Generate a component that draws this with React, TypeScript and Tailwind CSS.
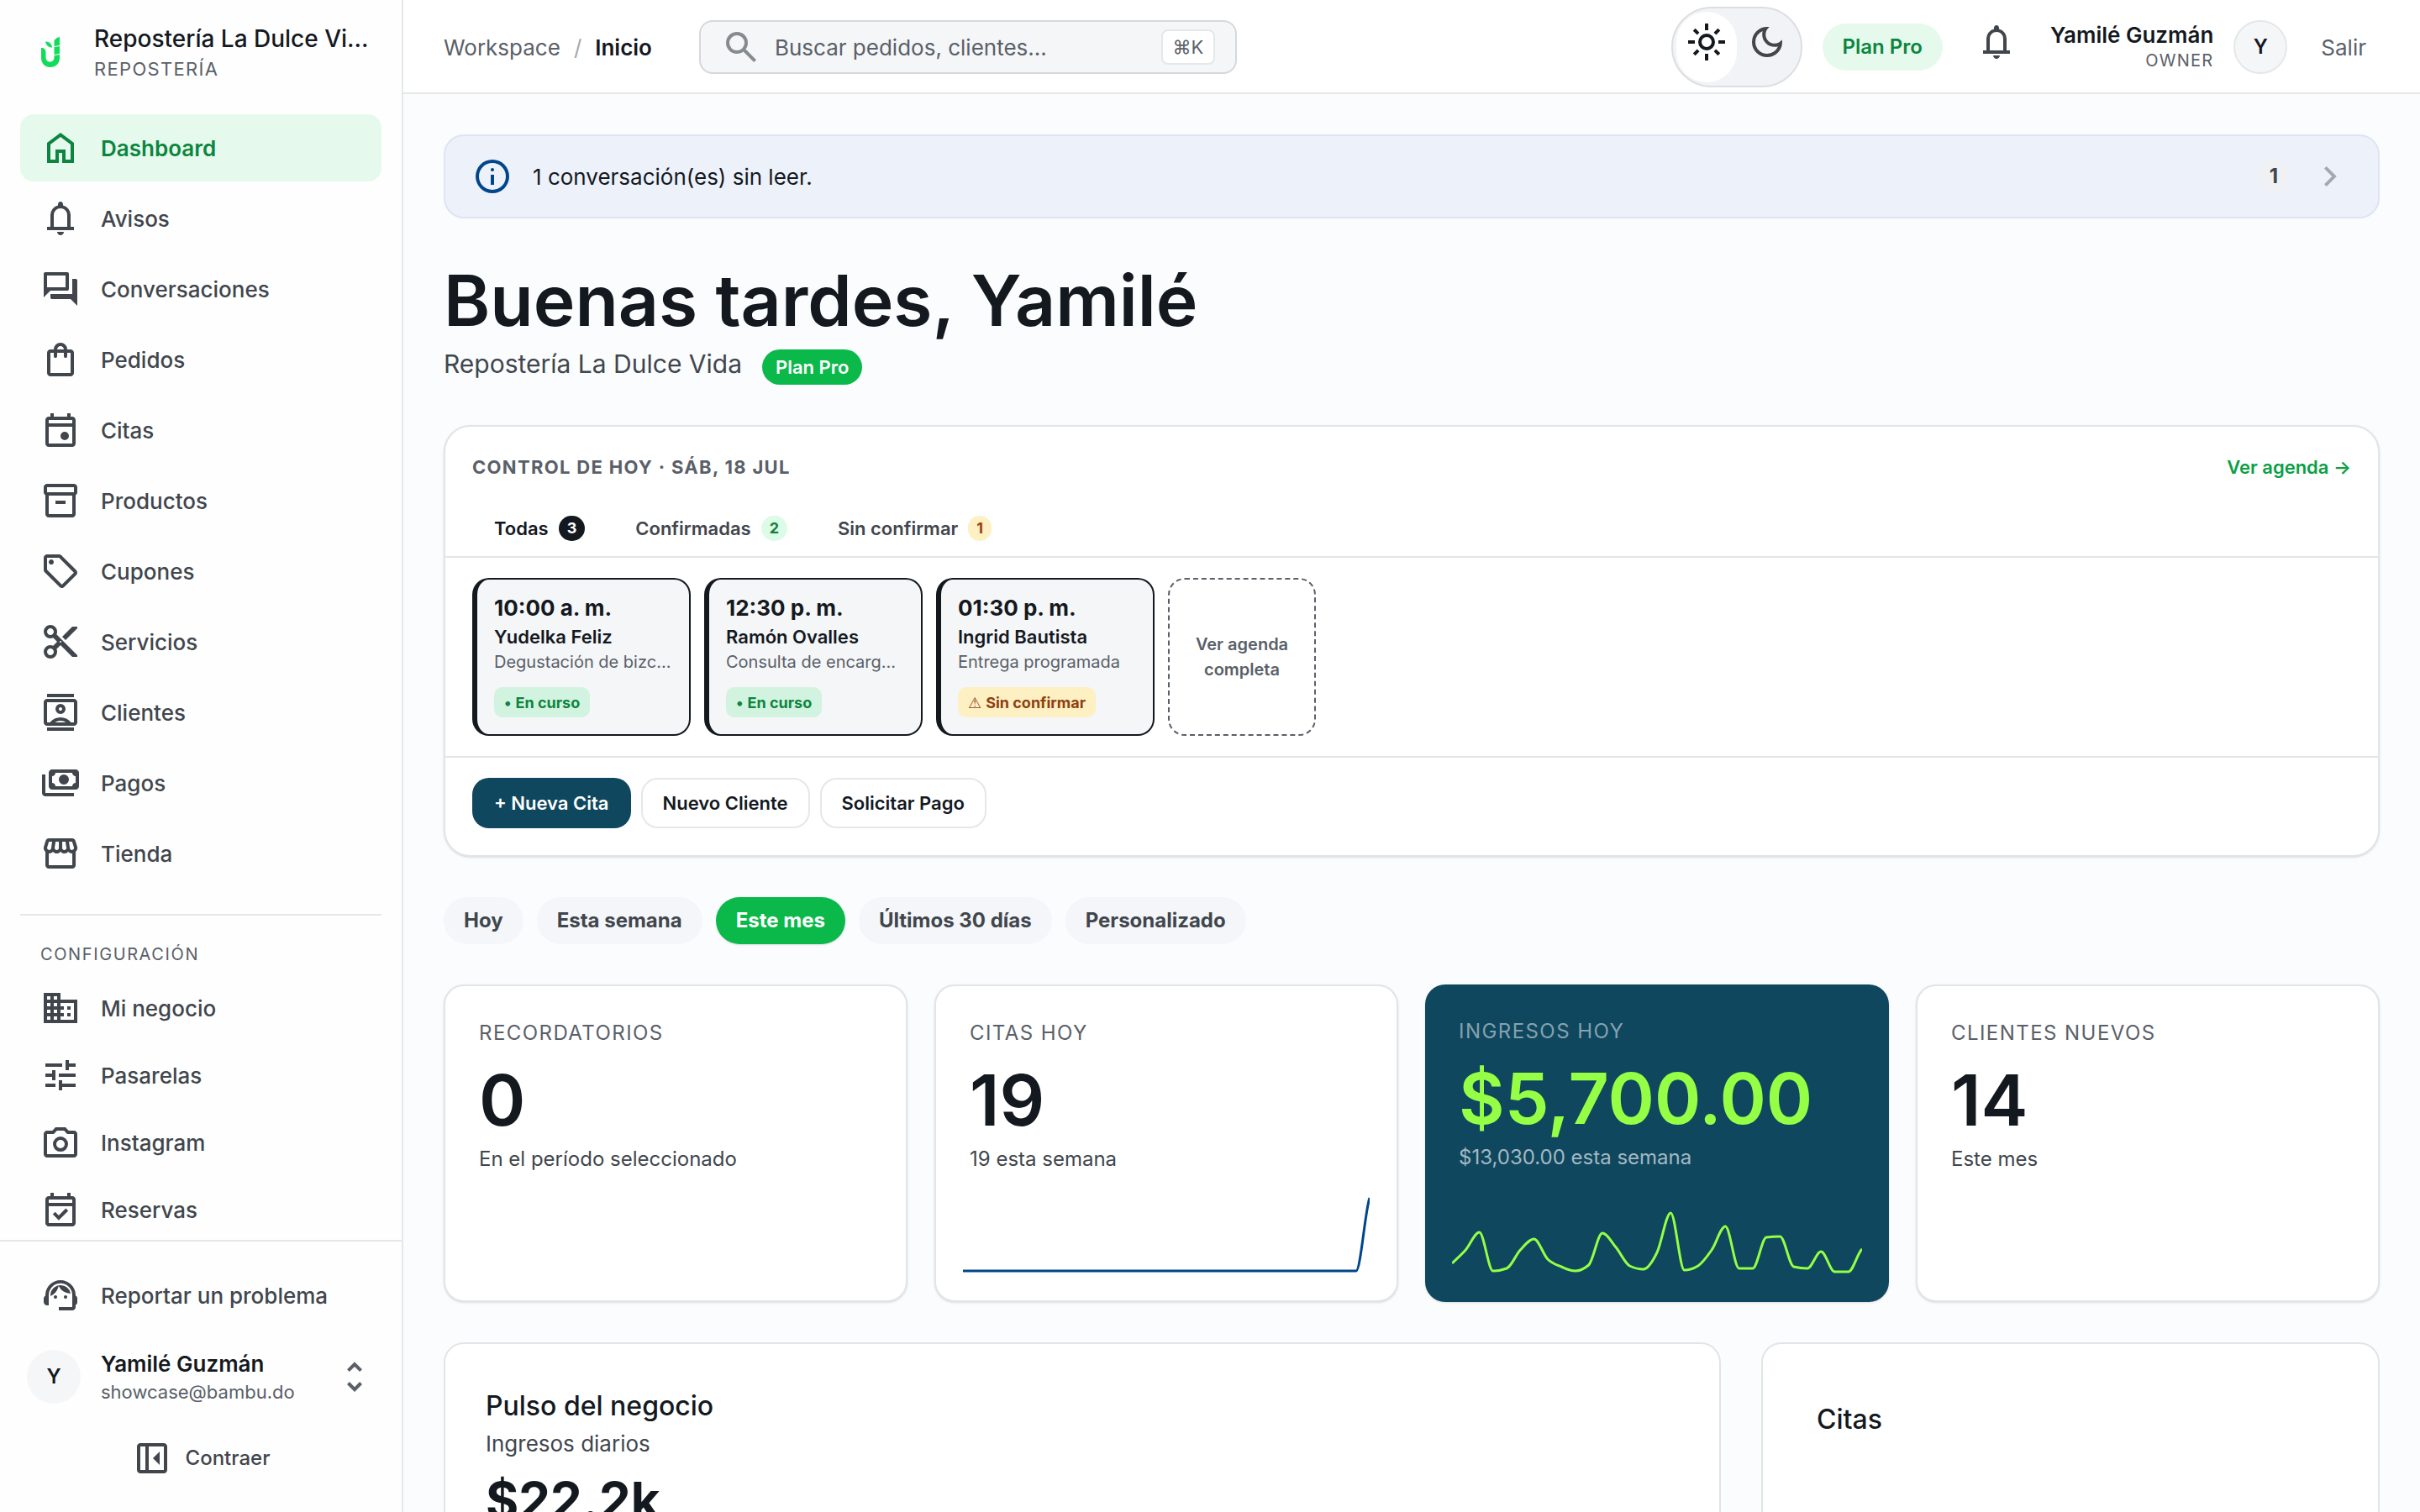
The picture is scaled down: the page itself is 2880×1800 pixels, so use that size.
import React from 'react';
import clsx from 'clsx';

// Icon outlines, drawn on the 960 unit grid.
const icons = {
  home: 'M240-200h120v-240h240v240h120v-360L480-740 240-560v360Zm-80 80v-480l320-240 320 240v480H520v-240h-80v240H160Z',
  bell: 'M160-200v-80h80v-280q0-83 50-147.5T420-792v-28q0-25 17.5-42.5T480-880q25 0 42.5 17.5T540-820v28q80 20 130 84.5T720-560v280h80v80H160Zm320 120q-33 0-56.5-23.5T400-160h160q0 33-23.5 56.5T480-80ZM320-280h320v-280q0-66-47-113t-113-47q-66 0-113 47t-47 113v280Z',
  forum: 'M280-240q-17 0-28.5-11.5T240-280v-80h520v-360h80q17 0 28.5 11.5T880-680v600L720-240H280ZM80-280v-560q0-17 11.5-28.5T120-880h520q17 0 28.5 11.5T680-840v360q0 17-11.5 28.5T640-440H240L80-280Zm520-240v-280H160v280h440Z',
  bag: 'M240-80q-33 0-56.5-23.5T160-160v-480q0-33 23.5-56.5T240-720h80q0-66 47-113t113-47q66 0 113 47t47 113h80q33 0 56.5 23.5T800-640v480q0 33-23.5 56.5T720-80H240Zm0-80h480v-480h-80v80q0 17-11.5 28.5T600-520q-17 0-28.5-11.5T560-560v-80H400v80q0 17-11.5 28.5T360-520q-17 0-28.5-11.5T320-560v-80h-80v480Zm160-560h160q0-33-23.5-56.5T480-800q-33 0-56.5 23.5T400-720Z',
  event: 'M580-240q-42 0-71-29t-29-71q0-42 29-71t71-29q42 0 71 29t29 71q0 42-29 71t-71 29ZM200-80q-33 0-56.5-23.5T120-160v-560q0-33 23.5-56.5T200-800h40v-80h80v80h320v-80h80v80h40q33 0 56.5 23.5T840-720v560q0 33-23.5 56.5T760-80H200Zm0-80h560v-400H200v400Zm0-480h560v-80H200v80Z',
  box: 'M200-80q-33 0-56.5-23.5T120-160v-451q-18-11-29-28.5T80-680v-120q0-33 23.5-56.5T160-880h640q33 0 56.5 23.5T880-800v120q0 23-11 40.5T840-611v451q0 33-23.5 56.5T760-80H200Zm0-520v440h560v-440H200Zm-40-80h640v-120H160v120Zm200 280h240v-80H360v80Z',
  tag: 'M856-390 570-104q-12 12-27 18t-30 6q-15 0-30-6t-27-18L103-457q-11-11-17-25.5T80-513v-287q0-33 23.5-56.5T160-880h287q16 0 31 6.5t26 17.5l352 353q12 12 17.5 27t5.5 30q0 15-5.5 29.5T856-390ZM513-160l286-286-353-354H160v286l353 354ZM260-640q25 0 42.5-17.5T320-700q0-25-17.5-42.5T260-760q-25 0-42.5 17.5T200-700q0 25 17.5 42.5T260-640Z',
  scissors: 'M760-120 480-400l-94 94q8 15 11 32t3 34q0 66-47 113T240-80q-66 0-113-47T80-240q0-66 47-113t113-47q17 0 34 3t32 11l94-94-94-94q-15 8-32 11t-34 3q-66 0-113-47T80-720q0-66 47-113t113-47q66 0 113 47t47 113q0 17-3 34t-11 32l494 494v40H760ZM600-520l-80-80 240-240h120v40L600-520ZM240-640q33 0 56.5-23.5T320-720q0-33-23.5-56.5T240-800q-33 0-56.5 23.5T160-720q0 33 23.5 56.5T240-640Zm240 180q8 0 14-6t6-14q0-8-6-14t-14-6q-8 0-14 6t-6 14q0 8 6 14t14 6ZM240-160q33 0 56.5-23.5T320-240q0-33-23.5-56.5T240-320q-33 0-56.5 23.5T160-240q0 33 23.5 56.5T240-160Z',
  contacts: 'M160-40v-80h640v80H160Zm0-800v-80h640v80H160Zm320 400q-50 0-85-35t-35-85q0-50 35-85t85-35q50 0 85 35t35 85q0 50-35 85t-85 35Zm0-80q17 0 28.5-11.5T520-560q0-17-11.5-28.5T480-600q-17 0-28.5 11.5T440-560q0 17 11.5 28.5T480-520ZM160-160q-33 0-56.5-23.5T80-240v-480q0-33 23.5-56.5T160-800h640q33 0 56.5 23.5T880-720v480q0 33-23.5 56.5T800-160H160Zm70-80q45-56 109-88t141-32q77 0 141 32t109 88h70v-480H160v480h70Zm118 0h264q-29-20-62.5-30T480-280q-36 0-69.5 10T348-240Z',
  payments: 'M560-440q-50 0-85-35t-35-85q0-50 35-85t85-35q50 0 85 35t35 85q0 50-35 85t-85 35ZM280-320q-33 0-56.5-23.5T200-400v-320q0-33 23.5-56.5T280-800h560q33 0 56.5 23.5T920-720v320q0 33-23.5 56.5T840-320H280Zm80-80h400q0-33 23.5-56.5T840-480v-160q-33 0-56.5-23.5T760-720H360q0 33-23.5 56.5T280-640v160q33 0 56.5 23.5T360-400Zm440 240H120q-33 0-56.5-23.5T40-240v-440h80v440h680v80Z',
  store: 'M841-518v318q0 33-23.5 56.5T761-120H201q-33 0-56.5-23.5T121-200v-318q-23-21-35.5-54t-.5-72l42-136q8-26 28.5-43t47.5-17h556q27 0 47 16.5t29 43.5l42 136q12 39-.5 71T841-518Zm-272-42q27 0 41-18.5t11-41.5l-22-140h-78v148q0 21 14 36.5t34 15.5Zm-180 0q23 0 37.5-15.5T441-612v-148h-78l-22 140q-4 24 10.5 42t37.5 18Zm-178 0q18 0 31.5-13t16.5-33l22-154h-78l-40 134q-6 20 6.5 43t41.5 23Zm540 0q29 0 42-23t6-43l-42-134h-76l22 154q3 20 16.5 33t31.5 13ZM201-200h560v-282q-5 2-6.5 2H751q-27 0-47.5-9T663-518q-18 18-41 28t-49 10q-27 0-50.5-10T481-518q-17 18-39.5 28T393-480q-29 0-52.5-10T299-518q-21 21-41.5 29.5T211-480h-4.5q-2.5 0-5.5-2v282Z',
  domain: 'M80-120v-720h400v160h400v560H80Zm80-80h80v-80h-80v80Zm0-160h80v-80h-80v80Zm0-160h80v-80h-80v80Zm0-160h80v-80h-80v80Zm160 480h80v-80h-80v80Zm0-160h80v-80h-80v80Zm0-160h80v-80h-80v80Zm0-160h80v-80h-80v80Zm160 480h320v-400H480v80h80v80h-80v80h80v80h-80v80Zm160-240v-80h80v80h-80Zm0 160v-80h80v80h-80Z',
  tune: 'M440-120v-240h80v80h320v80H520v80h-80Zm-320-80v-80h240v80H120Zm160-160v-80H120v-80h160v-80h80v240h-80Zm160-80v-80h400v80H440Zm160-160v-240h80v80h160v80H680v80h-80Zm-480-80v-80h400v80H120Z',
  camera: 'M480-260q-75 0-127.5-52.5T300-440q0-75 52.5-127.5T480-620q75 0 127.5 52.5T660-440q0 75-52.5 127.5T480-260Zm0-80q42 0 71-29t29-71q0-42-29-71t-71-29q-42 0-71 29t-29 71q0 42 29 71t71 29ZM160-120q-33 0-56.5-23.5T80-200v-480q0-33 23.5-56.5T160-760h126l74-80h240l74 80h126q33 0 56.5 23.5T880-680v480q0 33-23.5 56.5T800-120H160Zm0-80h640v-480H638l-73-80H395l-73 80H160v480Z',
  eventCheck: 'M438-226 296-368l58-58 84 84 168-168 58 58-226 226ZM200-80q-33 0-56.5-23.5T120-160v-560q0-33 23.5-56.5T200-800h40v-80h80v80h320v-80h80v80h40q33 0 56.5 23.5T840-720v560q0 33-23.5 56.5T760-80H200Zm0-80h560v-400H200v400Zm0-480h560v-80H200v80Z',
  support: 'M440-120v-80h320v-284q0-117-81.5-198.5T480-764q-117 0-198.5 81.5T200-484v244h-40q-33 0-56.5-23.5T80-320v-80q0-21 10.5-39.5T120-469l3-53q8-68 39.5-126t79-101q47.5-43 109-67T480-840q68 0 129 24t109 66.5Q766-707 797-649t40 126l3 52q19 9 29.5 27t10.5 38v92q0 20-10.5 38T840-249v49q0 33-23.5 56.5T760-120H440Zm-80-280q-17 0-28.5-11.5T320-440q0-17 11.5-28.5T360-480q17 0 28.5 11.5T400-440q0 17-11.5 28.5T360-400Zm240 0q-17 0-28.5-11.5T560-440q0-17 11.5-28.5T600-480q17 0 28.5 11.5T640-440q0 17-11.5 28.5T600-400Zm-359-62q-7-106 64-182t177-76q89 0 156.5 56.5T720-519q-91-1-167.5-49T435-698q-16 80-67.5 142.5T241-462Z',
  unfold: 'M480-120 300-300l58-58 122 122 122-122 58 58-180 180ZM358-598l-58-58 180-180 180 180-58 58-122-122-122 122Z',
  collapse: 'M660-320v-320L500-480l160 160ZM200-120q-33 0-56.5-23.5T120-200v-560q0-33 23.5-56.5T200-840h560q33 0 56.5 23.5T840-760v560q0 33-23.5 56.5T760-120H200Zm120-80v-560H200v560h120Zm80 0h360v-560H400v560Z',
  search: 'M784-120 532-372q-30 24-69 38t-83 14q-109 0-184.5-75.5T120-580q0-109 75.5-184.5T380-840q109 0 184.5 75.5T640-580q0 44-14 83t-38 69l252 252-56 56ZM380-400q75 0 127.5-52.5T560-580q0-75-52.5-127.5T380-760q-75 0-127.5 52.5T200-580q0 75 52.5 127.5T380-400Z',
  info: 'M440-280h80v-240h-80v240Zm40-320q17 0 28.5-11.5T520-640q0-17-11.5-28.5T480-680q-17 0-28.5 11.5T440-640q0 17 11.5 28.5T480-600Zm0 520q-83 0-156-31.5T197-197q-54-54-85.5-127T80-480q0-83 31.5-156T197-763q54-54 127-85.5T480-880q83 0 156 31.5T763-763q54 54 85.5 127T880-480q0 83-31.5 156T763-197q-54 54-127 85.5T480-80Zm0-80q134 0 227-93t93-227q0-134-93-227t-227-93q-134 0-227 93t-93 227q0 134 93 227t227 93Z',
  chevron: 'M504-480 320-664l56-56 240 240-240 240-56-56 184-184Z',
  sun: 'M480-360q50 0 85-35t35-85q0-50-35-85t-85-35q-50 0-85 35t-35 85q0 50 35 85t85 35Zm0 80q-83 0-141.5-58.5T280-480q0-83 58.5-141.5T480-680q83 0 141.5 58.5T680-480q0 83-58.5 141.5T480-280ZM200-440H40v-80h160v80Zm720 0H760v-80h160v80ZM440-760v-160h80v160h-80Zm0 720v-160h80v160h-80ZM256-650l-101-97 57-59 96 100-52 56Zm492 496-97-101 53-55 101 97-57 59Zm-98-550 97-101 59 57-100 96-56-52ZM154-212l101-97 55 53-97 101-59-57Z',
  moon: 'M480-120q-150 0-255-105T120-480q0-150 105-255t255-105q14 0 27.5 1t26.5 3q-41 29-65.5 75.5T444-660q0 90 63 153t153 63q55 0 101-24.5t75-65.5q2 13 3 26.5t1 27.5q0 150-105 255T480-120Zm0-80q88 0 158-48.5T740-375q-20 5-40 8t-40 3q-123 0-209.5-86.5T364-660q0-20 3-40t8-40q-78 32-126.5 102T200-480q0 116 82 198t198 82Z',
};

type IconName = keyof typeof icons;

const Icon = ({ name, className }: { name: IconName; className?: string }) => (
  <svg viewBox="0 -960 960 960" fill="currentColor" aria-hidden="true" className={clsx('size-12 shrink-0', className)}>
    <path d={icons[name]} />
  </svg>
);

const mainNav: { label: string; icon: IconName }[] = [
  { label: 'Dashboard', icon: 'home' },
  { label: 'Avisos', icon: 'bell' },
  { label: 'Conversaciones', icon: 'forum' },
  { label: 'Pedidos', icon: 'bag' },
  { label: 'Citas', icon: 'event' },
  { label: 'Productos', icon: 'box' },
  { label: 'Cupones', icon: 'tag' },
  { label: 'Servicios', icon: 'scissors' },
  { label: 'Clientes', icon: 'contacts' },
  { label: 'Pagos', icon: 'payments' },
  { label: 'Tienda', icon: 'store' },
];

const configNav: { label: string; icon: IconName }[] = [
  { label: 'Mi negocio', icon: 'domain' },
  { label: 'Pasarelas', icon: 'tune' },
  { label: 'Instagram', icon: 'camera' },
  { label: 'Reservas', icon: 'eventCheck' },
];

const tabs = [
  { label: 'Todas', count: 3, text: 'text-[#14191f]', badge: 'bg-[#14191f] text-white' },
  { label: 'Confirmadas', count: 2, text: 'text-[#41464d]', badge: 'bg-[#dcfce7] text-[#15803d]' },
  { label: 'Sin confirmar', count: 1, text: 'text-[#41464d]', badge: 'bg-[#fdf0c3] text-[#9a4512]' },
];

const appointments = [
  { time: '10:00 a. m.', name: 'Yudelka Feliz', service: 'Degustación de bizcochos', confirmed: true },
  { time: '12:30 p. m.', name: 'Ramón Ovalles', service: 'Consulta de encargo especial', confirmed: true },
  { time: '01:30 p. m.', name: 'Ingrid Bautista', service: 'Entrega programada', confirmed: false },
];

const periods = ['Hoy', 'Esta semana', 'Este mes', 'Últimos 30 días', 'Personalizado'];

const citasSeries = [...Array(30).fill(0), 87];
const ingresosSeries = [
  11, 27, 48, 2, 5, 27, 40, 16, 7, 2, 9, 47, 30, 8, 4, 24, 71, 3, 8, 27, 55, 5, 5, 42, 43, 7, 5, 25, 1, 1, 28,
];

const kpis = [
  { label: 'Recordatorios', value: '0', note: 'En el período seleccionado' },
  { label: 'Citas hoy', value: '19', note: '19 esta semana', series: citasSeries, color: '#00468c' },
  { label: 'Ingresos hoy', value: '$5,700.00', note: '$13,030.00 esta semana', series: ingresosSeries, color: '#94ff45', dark: true },
  { label: 'Clientes nuevos', value: '14', note: 'Este mes' },
];

// Monotone cubic through evenly spaced points, so the line never overshoots a value.
function linePath(values: number[]) {
  const step = 484 / (values.length - 1);
  const pts = values.map((v, i) => [i * step, 93 - v]);
  const slopes = pts.slice(1).map((p, i) => (p[1] - pts[i][1]) / step);
  const tangents = pts.map((_, i) => {
    if (i === 0) return slopes[0];
    if (i === pts.length - 1) return slopes[i - 1] / 2;
    const a = slopes[i - 1];
    const b = slopes[i];
    if (a * b <= 0) return 0;
    return Math.sign(a) * Math.min(Math.abs(a), Math.abs(b), Math.abs(a + b) / 4) * 2;
  });
  return pts.reduce((d, [x, y], i) => {
    if (i === 0) return `M${x},${y}`;
    const [px, py] = pts[i - 1];
    const t = step / 3;
    return `${d}C${px + t},${py + tangents[i - 1] * t},${x - t},${y - tangents[i] * t},${x},${y}`;
  }, '');
}

const Sparkline = ({ values, color }: { values: number[]; color: string }) => (
  <svg viewBox="0 0 484 96" preserveAspectRatio="none" fill="none" aria-hidden="true" className="h-24 w-full">
    <path d={linePath(values)} stroke={color} strokeWidth="3" vectorEffect="non-scaling-stroke" />
  </svg>
);

const Logo = () => (
  <svg viewBox="0 0 24 36" aria-hidden="true" className="ml-2 h-9 w-6 shrink-0 fill-[#12dc5a]">
    <path d="M1 13c3.500 0 5.500 2 5.500 5.500V24c0 3.500 2 5.500 5 5.500s5-2 5-5.500v-2L23 21v4c0 6.500-4.500 11-11 11S1 31.500 1 25Z" />
    <path d="M16.500 12 23 11v9l-6.500 1Z" />
    <path d="M16.500 4.500C18 2 20 .500 23 0v10l-6.500 1Z" />
    <path d="M6 5.500c4.500 0 7.500 2.500 8 7C9.500 12.500 7 10 6 5.500Z" />
  </svg>
);

const NavItem = ({ label, icon, active }: { label: string; icon: IconName; active?: boolean }) => (
  <a
    href="#"
    aria-current={active ? 'page' : undefined}
    className={clsx(
      'flex h-20 shrink-0 items-center gap-6 rounded-2xl px-6 text-[26px]',
      active ? 'bg-[#e5faec] font-semibold text-[#0c8540]' : 'font-medium text-[#41464d]'
    )}
  >
    <Icon name={icon} />
    {label}
  </a>
);

const Sidebar = () => (
  <aside className="flex w-[480px] shrink-0 flex-col border-r-2 border-[#e5e7e9] bg-[#fefefe]">
    <div className="flex h-28 shrink-0 items-center gap-10 pt-3 pr-8 pl-10">
      <Logo />
      <div className="min-w-0">
        <p className="truncate text-[28px] leading-10 font-medium text-[#14191f]">Repostería La Dulce Vida</p>
        <p className="text-[22px] leading-8 tracking-[0.06em] text-[#5a6068] uppercase">Repostería</p>
      </div>
    </div>

    <div className="flex min-h-0 grow flex-col overflow-hidden px-6 pt-6">
      <nav className="flex flex-col gap-1">
        {mainNav.map((item) => (
          <NavItem key={item.label} {...item} active={item.label === 'Dashboard'} />
        ))}
      </nav>
      <div className="mt-8 border-t-2 border-[#e5e7e9] pt-[30px]">
        <h2 className="px-6 text-[20px] leading-8 tracking-[0.08em] text-[#5a6068] uppercase">Configuración</h2>
        <nav className="mt-2 flex flex-col">
          {configNav.map((item) => (
            <NavItem key={item.label} {...item} />
          ))}
        </nav>
      </div>
    </div>

    <div className="shrink-0 border-t-2 border-[#e5e7e9] px-6 py-6">
      <NavItem label="Reportar un problema" icon="support" />
      <button className="flex w-full items-center gap-6 px-2 py-6 text-left">
        <span className="grid size-16 shrink-0 place-items-center rounded-full bg-[#f4f6f8] text-[24px] font-semibold text-[#14191f]">
          Y
        </span>
        <span className="grow">
          <span className="block text-[26px] leading-9 font-semibold text-[#14191f]">Yamilé Guzmán</span>
          <span className="block text-[22px] leading-[30px] text-[#5a6068]">showcase@bambu.do</span>
        </span>
        <Icon name="unfold" className="text-[#5a6068]" />
      </button>
      <button className="flex h-20 w-full items-center justify-center gap-4 text-[24px] font-medium text-[#41464d]">
        <Icon name="collapse" />
        Contraer
      </button>
    </div>
  </aside>
);

const Header = () => (
  <header className="flex h-28 shrink-0 items-center bg-white px-12 shadow-[inset_0_-2px_0_#e5e7e9]">
    <nav className="flex items-center gap-4 text-[26px] text-[#5a6068]">
      <a href="#">Workspace</a>
      <span className="text-[#a4a9ae]">/</span>
      <span className="font-semibold text-[#14191f]">Inicio</span>
    </nav>
    <label className="ml-14 flex h-16 w-[640px] items-center gap-4 rounded-2xl border-2 border-[#d6d9dc] bg-[#f4f6f8] px-6 text-[#868b90]">
      <Icon name="search" />
      <input
        type="search"
        aria-label="Buscar"
        placeholder="Buscar pedidos, clientes..."
        className="min-w-0 grow text-[26px] text-[#14191f] outline-none placeholder:text-[#5a6068]"
      />
      <kbd className="grid h-[42px] w-16 place-items-center rounded-lg border-2 border-[#e5e7e9] bg-white font-[Inter,sans-serif] text-[22px] text-[#5a6068]">
        ⌘K
      </kbd>
    </label>

    <div className="ml-auto flex items-center gap-6">
      <div className="flex rounded-full border-2 border-[#dcdfe2] bg-[#f1f3f6] p-1">
        <button aria-label="Modo claro" className="rounded-full bg-white px-3 pt-3 pb-6 text-[#14191f]">
          <Icon name="sun" />
        </button>
        <button aria-label="Modo oscuro" className="rounded-full px-3 pt-3 pb-6 text-[#41464d]">
          <Icon name="moon" />
        </button>
      </div>
      <span className="rounded-full bg-[#e5faec] px-6 py-3 text-[24px] leading-8 font-semibold text-[#0c8540]">Plan Pro</span>
      <button aria-label="Notificaciones" className="px-4 pb-3 text-[#41464d]">
        <Icon name="bell" />
      </button>
      <div className="text-right">
        <p className="text-[26px] leading-8 font-semibold text-[#14191f]">Yamilé Guzmán</p>
        <p className="text-[20px] leading-7 tracking-[0.06em] text-[#5a6068]">OWNER</p>
      </div>
      <span className="grid size-16 place-items-center rounded-full border-2 border-[#e5e7e9] bg-[#f4f6f8] text-[24px] font-semibold text-[#14191f]">
        Y
      </span>
      <button className="px-4 text-[26px] text-[#5a6068]">Salir</button>
    </div>
  </header>
);

const TodayPanel = () => (
  <section className="mt-12 rounded-[32px] border-2 border-[#e2e5e7] bg-white shadow-sm">
    <div className="flex items-center justify-between px-8 pt-8 text-[22px] leading-8">
      <h2 className="font-bold tracking-[0.06em] text-[#5a6068] uppercase">Control de hoy · sáb, 18 jul</h2>
      <a href="#" className="font-semibold text-[#0a9f45]">
        Ver agenda →
      </a>
    </div>

    <div className="mt-6 flex gap-2 border-b-2 border-[#e2e5e7] px-8">
      {tabs.map((tab) => (
        <button key={tab.label} className={clsx('flex h-[66px] items-center gap-3 px-[26px] text-[22px] font-semibold', tab.text)}>
          {tab.label}
          <span className={clsx('rounded-full px-[10px] text-[18px] leading-[30px] font-bold', tab.badge)}>{tab.count}</span>
        </button>
      ))}
    </div>

    <div className="flex gap-4 border-b-2 border-[#e2e5e7] px-8 py-6">
      {appointments.map((a) => (
        <article key={a.time} className="w-[260px] rounded-[20px] border-2 border-l-6 border-[#14191f] bg-[#f4f6f8] p-5">
          <p className="text-[26px] leading-7 font-bold text-[#14191f]">{a.time}</p>
          <p className="mt-1 text-[22px] leading-8 font-semibold text-[#14191f]">{a.name}</p>
          <p className="truncate text-[20px] leading-7 text-[#5a6068]">{a.service}</p>
          <span
            className={clsx(
              'mt-4 flex h-9 w-fit items-center gap-[5px] rounded-[10px] px-3 text-[18px] font-bold',
              a.confirmed ? 'bg-[#d2f3df] text-[#0c8540]' : 'bg-[#fdf0c3] text-[#8f3f10]'
            )}
          >
            {a.confirmed ? <span>•</span> : <span className="font-['DejaVu_Sans',sans-serif] font-normal">⚠</span>}
            {a.confirmed ? 'En curso' : 'Sin confirmar'}
          </span>
        </article>
      ))}
      <a
        href="#"
        className="flex w-44 items-center justify-center rounded-[20px] border-2 border-dashed border-[#5a6068] px-6 text-center text-[20px] leading-[30px] font-semibold text-[#5a6068]"
      >
        Ver agenda completa
      </a>
    </div>

    <div className="flex gap-3 px-8 pt-6 pb-8 text-[22px] font-semibold text-[#14191f]">
      <button className="h-[60px] rounded-[20px] bg-[#0f475e] px-[26px] text-white">+ Nueva Cita</button>
      <button className="h-[60px] rounded-[20px] border-2 border-[#e5e7e9] px-6">Nuevo Cliente</button>
      <button className="h-[60px] rounded-[20px] border-2 border-[#e5e7e9] px-6">Solicitar Pago</button>
    </div>
  </section>
);

export default function App() {
  return (
    <div className="flex h-screen overflow-hidden bg-[#fafcfe] font-[Inter,sans-serif]">
      <Sidebar />
      <div className="flex min-w-0 grow flex-col">
        <Header />
        <main className="min-h-0 grow overflow-hidden p-12">
          <a
            href="#"
            className="flex h-[100px] items-center gap-6 rounded-3xl border-2 border-[#dde4f2] bg-[#edf1fa] px-8 text-[26px] text-[#14191f]"
          >
            <Icon name="info" className="text-[#00468c]" />
            <span className="grow">1 conversación(es) sin leer.</span>
            <span className="grid h-10 w-10 place-items-center rounded-full bg-[#eff1f5] text-[24px] font-bold text-[#41464d]">1</span>
            <Icon name="chevron" className="text-[#a4a9ae]" />
          </a>

          <h1 className="mt-12 text-[84px] leading-[100px] font-semibold text-[#14191f]">Buenas tardes, Yamilé</h1>
          <div className="flex items-center gap-6">
            <p className="text-[30px] leading-[50px] text-[#41464d]">Repostería La Dulce Vida</p>
            <span className="mt-2 rounded-full bg-[#0bb84a] px-4 text-[22px] leading-[42px] font-semibold text-white">Plan Pro</span>
          </div>

          <TodayPanel />

          <div className="mt-12 flex gap-4">
            {periods.map((period) => (
              <button
                key={period}
                className={clsx(
                  'h-14 rounded-full px-6 text-[24px] font-bold',
                  period === 'Este mes' ? 'bg-[#0bb84a] text-white shadow-sm' : 'bg-[#f4f6f9] text-[#41464d]'
                )}
              >
                {period}
              </button>
            ))}
          </div>

          <div className="mt-12 grid grid-cols-4 gap-8">
            {kpis.map((kpi) => (
              <article
                key={kpi.label}
                className={clsx('flex flex-col rounded-3xl shadow-sm', kpi.dark ? 'bg-[#0f475e]' : 'border-2 border-[#e2e5e7] bg-white')}
              >
                <div className="px-10 pt-10">
                  <p className={clsx('text-[24px] leading-8 tracking-[0.06em] uppercase', kpi.dark ? 'text-[#84a2b0]' : 'text-[#5a6068]')}>
                    {kpi.label}
                  </p>
                  <p className={clsx('mt-4 text-[84px] leading-[96px] font-semibold', kpi.dark ? 'text-[#94ff45]' : 'text-[#14191f]')}>
                    {kpi.value}
                  </p>
                  <p className={clsx('mt-1 text-[24px] leading-9', kpi.dark ? 'text-[#a3b9c3]' : 'text-[#41464d]')}>{kpi.note}</p>
                </div>
                {kpi.series && (
                  <div className="mt-auto px-8 pt-[22px] pb-8">
                    <Sparkline values={kpi.series} color={kpi.color} />
                  </div>
                )}
              </article>
            ))}
          </div>

          <div className="mt-12 grid grid-cols-12 gap-12">
            <section className="col-span-8 rounded-3xl border-2 border-[#e2e5e7] bg-white p-12">
              <h2 className="pt-1 text-[32px] leading-[44px] font-medium text-[#14191f]">Pulso del negocio</h2>
              <p className="text-[26px] leading-[46px] text-[#41464d]">Ingresos diarios</p>
              <p className="mt-2 text-[60px] leading-[72px] font-bold text-[#14191f]">$22.2k</p>
            </section>
            <section className="col-span-4 rounded-3xl border-2 border-[#e2e5e7] bg-white p-16">
              <h2 className="pt-1 text-[32px] leading-[44px] font-medium text-[#14191f]">Citas</h2>
            </section>
          </div>
        </main>
      </div>
    </div>
  );
}
